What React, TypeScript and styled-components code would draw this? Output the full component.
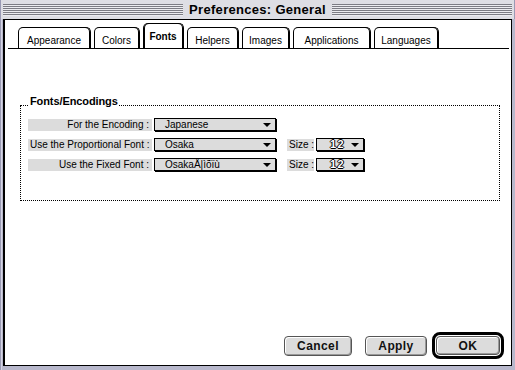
import React from 'react'
import styled, { createGlobalStyle } from 'styled-components'

const GlobalStyle = createGlobalStyle`
  html, body {
    margin: 0;
    padding: 0;
    background: #b8b8cc;
  }
  body {
    font-family: "Liberation Sans", Arial, sans-serif;
    color: #000;
  }
`

const Window = styled.div`
  width: 515px;
  height: 370px;
  display: flex;
  flex-direction: column;
  background: #b8b8cc;
  box-sizing: border-box;
`

const TitleBar = styled.div`
  height: 19px;
  display: flex;
  align-items: center;
  gap: 6px;
  padding: 0 3px;
  background: #dedee4;
  box-shadow: inset 1px 0 0 #9a9ab4, inset -1px 0 0 #9a9ab4;
`

const Stripes = styled.div`
  flex: 1;
  height: 12px;
  margin-top: 1px;
  background: repeating-linear-gradient(to bottom, #7c7c84 0 1px, #ececf0 1px 2px);
`

const Title = styled.div`
  font-size: 13px;
  font-weight: bold;
  letter-spacing: 0.3px;
  line-height: 19px;
`

const Frame = styled.div`
  flex: 1;
  display: flex;
  padding: 0 3px 4px 3px;
  min-height: 0;
  box-shadow: inset 1px 0 0 #9a9ab4, inset 2px 0 0 #d4d4e4;
`

const Panel = styled.div`
  flex: 1;
  display: flex;
  flex-direction: column;
  background: #fff;
  border: 1px solid #000;
  border-left-width: 2px;
`

const TabBar = styled.div`
  height: 28px;
  display: flex;
  align-items: flex-end;
  gap: 3px;
  margin: 0 2px 0 3px;
  padding-left: 10px;
  border-bottom: 1px solid #000;
`

const Tab = styled.div<{ $w: number; $active?: boolean }>`
  box-sizing: border-box;
  width: ${p => p.$w}px;
  height: ${p => (p.$active ? 25 : 21)}px;
  display: flex;
  align-items: flex-end;
  justify-content: center;
  padding-bottom: ${p => (p.$active ? 5 : 1)}px;
  padding-right: 1px;
  border: 1px solid #000;
  border-bottom: none;
  border-radius: 5px 5px 0 0;
  box-shadow: inset -1px 0 0 #000${p => (p.$active ? ', inset 1px 0 0 #000' : '')};
  font-size: 10px;
  line-height: 12px;
  font-weight: ${p => (p.$active ? 'bold' : 'normal')};
  background: #fff;
`

const Group = styled.div`
  position: relative;
  margin: 56px 11px 0 15px;
  padding: 12px 0 28px 7px;
  border: 1px dotted #000;
  display: flex;
  flex-direction: column;
  gap: 6px;
`

const Legend = styled.div`
  position: absolute;
  top: -11px;
  left: 8px;
  padding: 0 1px;
  background: #fff;
  font-size: 11px;
  font-weight: bold;
  line-height: 12px;
  letter-spacing: -0.1px;
`

const Row = styled.div`
  height: 14px;
  display: flex;
  align-items: flex-start;
`

const Label = styled.div<{ $w: number; $align?: string }>`
  box-sizing: border-box;
  width: ${p => p.$w}px;
  height: 12px;
  margin-top: 1px;
  padding: 0 3px 0 2px;
  background: #dcdcdc;
  font-size: 10px;
  line-height: 12px;
  text-align: ${p => p.$align || 'right'};
  white-space: nowrap;
`

const Popup = styled.div<{ $w: number; $pad: number }>`
  box-sizing: border-box;
  width: ${p => p.$w}px;
  height: 13px;
  margin-left: 2px;
  display: flex;
  align-items: center;
  justify-content: space-between;
  padding: 0 4px 0 ${p => p.$pad}px;
  background: #dcdcdc;
  border: 1px solid #000;
  box-shadow: 1px 1px 0 #000;
  font-size: 10px;
  line-height: 11px;
  white-space: nowrap;
`

const OutlineNum = styled.span`
  font-size: 11px;
  font-weight: bold;
  letter-spacing: 1.5px;
  color: #ffffff;
  text-shadow: 1px 0 0 #000, -1px 0 0 #000, 0 1px 0 #000, 0 -1px 0 #000;
`

const Arrow = styled.span`
  width: 0;
  height: 0;
  border-left: 4px solid transparent;
  border-right: 4px solid transparent;
  border-top: 4px solid #000;
`

const SizeLabel = styled(Label)`
  margin-left: 11px;
`

const Spacer = styled.div`
  flex: 1;
`

const ButtonRow = styled.div`
  display: flex;
  justify-content: flex-end;
  align-items: center;
  margin: 0 7px 6px 0;
`

const Button = styled.div<{ $w: number; $gap?: number }>`
  box-sizing: border-box;
  width: ${p => p.$w}px;
  height: ${p => (p.$w ? 20 : 19)}px;
  margin-right: ${p => p.$gap || 0}px;
  display: flex;
  align-items: center;
  justify-content: center;
  background: #dcdcdc;
  border: 1px solid #555;
  border-radius: 4px;
  box-shadow: inset 1px 1px 0 #fff, inset -1px -1px 0 #999;
  font-size: 12px;
  font-weight: bold;
  letter-spacing: 0.4px;
  color: #111;
`

const DefaultRing = styled.div`
  box-sizing: border-box;
  width: 72px;
  height: 27px;
  padding: 1px;
  border: 3px solid #000;
  border-radius: 8px;
  display: flex;
  & > div {
    flex: 1;
    width: auto;
    height: auto;
  }
`

const tabs = [
  { name: 'Appearance', w: 73 },
  { name: 'Colors', w: 46 },
  { name: 'Fonts', w: 41, active: true },
  { name: 'Helpers', w: 52 },
  { name: 'Images', w: 48 },
  { name: 'Applications', w: 78 },
  { name: 'Languages', w: 65 },
]

const rows = [
  { label: 'For the Encoding :', value: 'Japanese', size: false },
  { label: 'Use the Proportional Font :', value: 'Osaka', size: true },
  { label: 'Use the Fixed Font :', value: 'OsakaÅ|ìõïù', size: true },
]

export default function App() {
  return (
    <>
      <GlobalStyle />
      <Window>
        <TitleBar>
          <Stripes />
          <Title>Preferences: General</Title>
          <Stripes />
        </TitleBar>
        <Frame>
          <Panel>
            <TabBar>
              {tabs.map(t => (
                <Tab key={t.name} $w={t.w} $active={t.active}>
                  {t.name}
                </Tab>
              ))}
            </TabBar>
            <Group>
              <Legend>Fonts/Encodings</Legend>
              {rows.map(r => (
                <Row key={r.label}>
                  <Label $w={124}>{r.label}</Label>
                  <Popup $w={122} $pad={10}>
                    <span>{r.value}</span>
                    <Arrow />
                  </Popup>
                  {r.size && (
                    <>
                      <SizeLabel $w={27} $align="left">Size :</SizeLabel>
                      <Popup $w={48} $pad={13}>
                        <OutlineNum>12</OutlineNum>
                        <Arrow />
                      </Popup>
                    </>
                  )}
                </Row>
              ))}
            </Group>
            <Spacer />
            <ButtonRow>
              <Button $w={68} $gap={13}>Cancel</Button>
              <Button $w={62} $gap={5}>Apply</Button>
              <DefaultRing>
                <Button $w={0}>OK</Button>
              </DefaultRing>
            </ButtonRow>
          </Panel>
        </Frame>
      </Window>
    </>
  )
}
